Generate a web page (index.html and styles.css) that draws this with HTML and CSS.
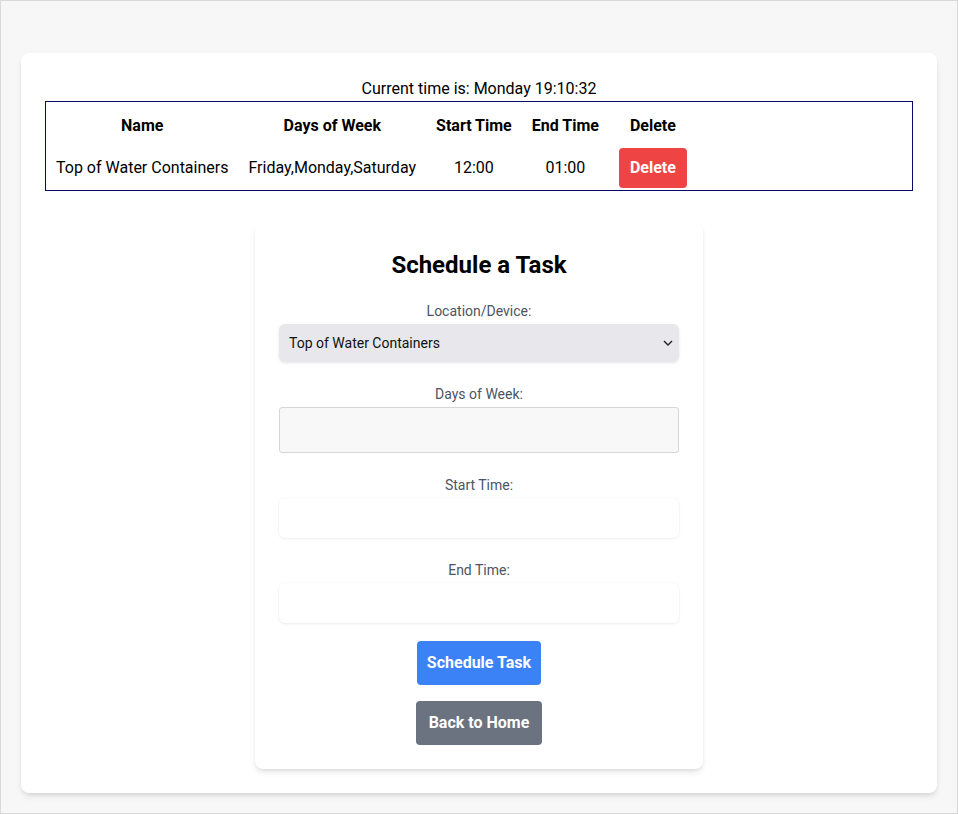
FILE: index.html
```html
<!DOCTYPE html>
<html lang="en">
<head>
<meta charset="utf-8">
<title>Schedule a Task</title>
<link rel="stylesheet" href="styles.css">
</head>
<body>
<div class="page">
  <main class="card">
    <p class="clock">Current time is: Monday 19:10:32</p>
    <div class="table-box">
      <table class="tasks">
        <thead>
          <tr><th>Name</th><th>Days of Week</th><th>Start Time</th><th>End Time</th><th>Delete</th></tr>
        </thead>
        <tbody>
          <tr>
            <td>Top of Water Containers</td>
            <td>Friday,Monday,Saturday</td>
            <td>12:00</td>
            <td>01:00</td>
            <td><button class="btn btn-red">Delete</button></td>
          </tr>
        </tbody>
      </table>
    </div>

    <form class="form-card">
      <h2 class="title">Schedule a Task</h2>
      <div class="group">
        <label class="label">Location/Device:</label>
        <div class="select-wrap">
          <select class="select"><option>Top of Water Containers</option></select>
          <svg class="chev" width="10" height="6" viewBox="0 0 10 6"><path d="M1 1l4 4 4-4" fill="none" stroke="#222" stroke-width="1.4"/></svg>
        </div>
      </div>
      <div class="group">
        <label class="label">Days of Week:</label>
        <div class="days-box"></div>
      </div>
      <div class="group">
        <label class="label">Start Time:</label>
        <div class="input"></div>
      </div>
      <div class="group group-last">
        <label class="label">End Time:</label>
        <div class="input"></div>
      </div>
      <div class="actions">
        <button type="button" class="btn btn-blue">Schedule Task</button>
        <button type="button" class="btn btn-gray">Back to Home</button>
      </div>
    </form>
  </main>
</div>
</body>
</html>
```
FILE: styles.css
```css
* { box-sizing: border-box; }
html, body { margin: 0; padding: 0; }
body {
  font-family: Roboto, "Noto Sans", sans-serif;
  color: #000;
  background: #f7f7f7;
}
.page {
  min-height: 814px;
  border: 1px solid #d9d9d9;
  padding: 52px 20px 20px;
}
.card {
  background: #fff;
  border-radius: 8px;
  box-shadow: 0 4px 6px -1px rgba(0,0,0,0.1), 0 2px 4px -2px rgba(0,0,0,0.1);
  padding: 24px;
}
.clock {
  margin: 0;
  text-align: center;
  font-size: 16px;
  line-height: 24px;
}
.table-box {
  border: 1px solid #0a0a6a;
}
.tasks {
  border-collapse: collapse;
  font-size: 16px;
}
.tasks th {
  font-weight: 700;
  padding: 12px 10px 10px;
  line-height: 24px;
  text-align: center;
}
.tasks td {
  padding: 0 10px 2px;
  line-height: 24px;
  text-align: center;
}
.btn {
  font-family: inherit;
  font-weight: 700;
  font-size: 16px;
  line-height: 24px;
  color: #fff;
  border: 0;
  border-radius: 4px;
  cursor: pointer;
}
.btn-red { background: #ef4444; padding: 8px 11px; }
.form-card {
  width: 448px;
  margin: 32px auto 0;
  background: #fff;
  border-radius: 8px;
  box-shadow: 0 4px 6px -1px rgba(0,0,0,0.1), 0 2px 4px -2px rgba(0,0,0,0.1);
  padding: 24px;
}
.title {
  margin: 0 0 18px;
  text-align: center;
  font-size: 24px;
  line-height: 36px;
  font-weight: 700;
}
.group { margin-bottom: 22px; }
.group-last { margin-bottom: 18px; }
.label {
  display: block;
  text-align: center;
  font-size: 14px;
  line-height: 20px;
  color: #4b5563;
  margin-bottom: 3px;
}
.select-wrap { position: relative; }
.select {
  display: block;
  width: 100%;
  height: 38px;
  appearance: none;
  -webkit-appearance: none;
  border: 0;
  border-radius: 6px;
  background: #e8e8ec;
  box-shadow: 0 1px 3px rgba(0,0,0,0.1);
  font-family: inherit;
  font-size: 14px;
  color: #111;
  padding: 0 10px;
}
.chev { position: absolute; right: 6px; top: 16px; }
.days-box {
  height: 46px;
  background: #f8f8f8;
  border: 1px solid #d6d6d6;
  border-radius: 3px;
}
.input {
  height: 40px;
  background: #fff;
  border-radius: 6px;
  box-shadow: 0 1px 3px rgba(0,0,0,0.06), 0 0 0 1px rgba(0,0,0,0.015);
}
.actions {
  display: flex;
  flex-direction: column;
  align-items: center;
  gap: 16px;
}
.btn-blue { background: #3b82f6; padding: 10px 10px; }
.btn-gray { background: #6b7280; padding: 10px 13px; }
```
